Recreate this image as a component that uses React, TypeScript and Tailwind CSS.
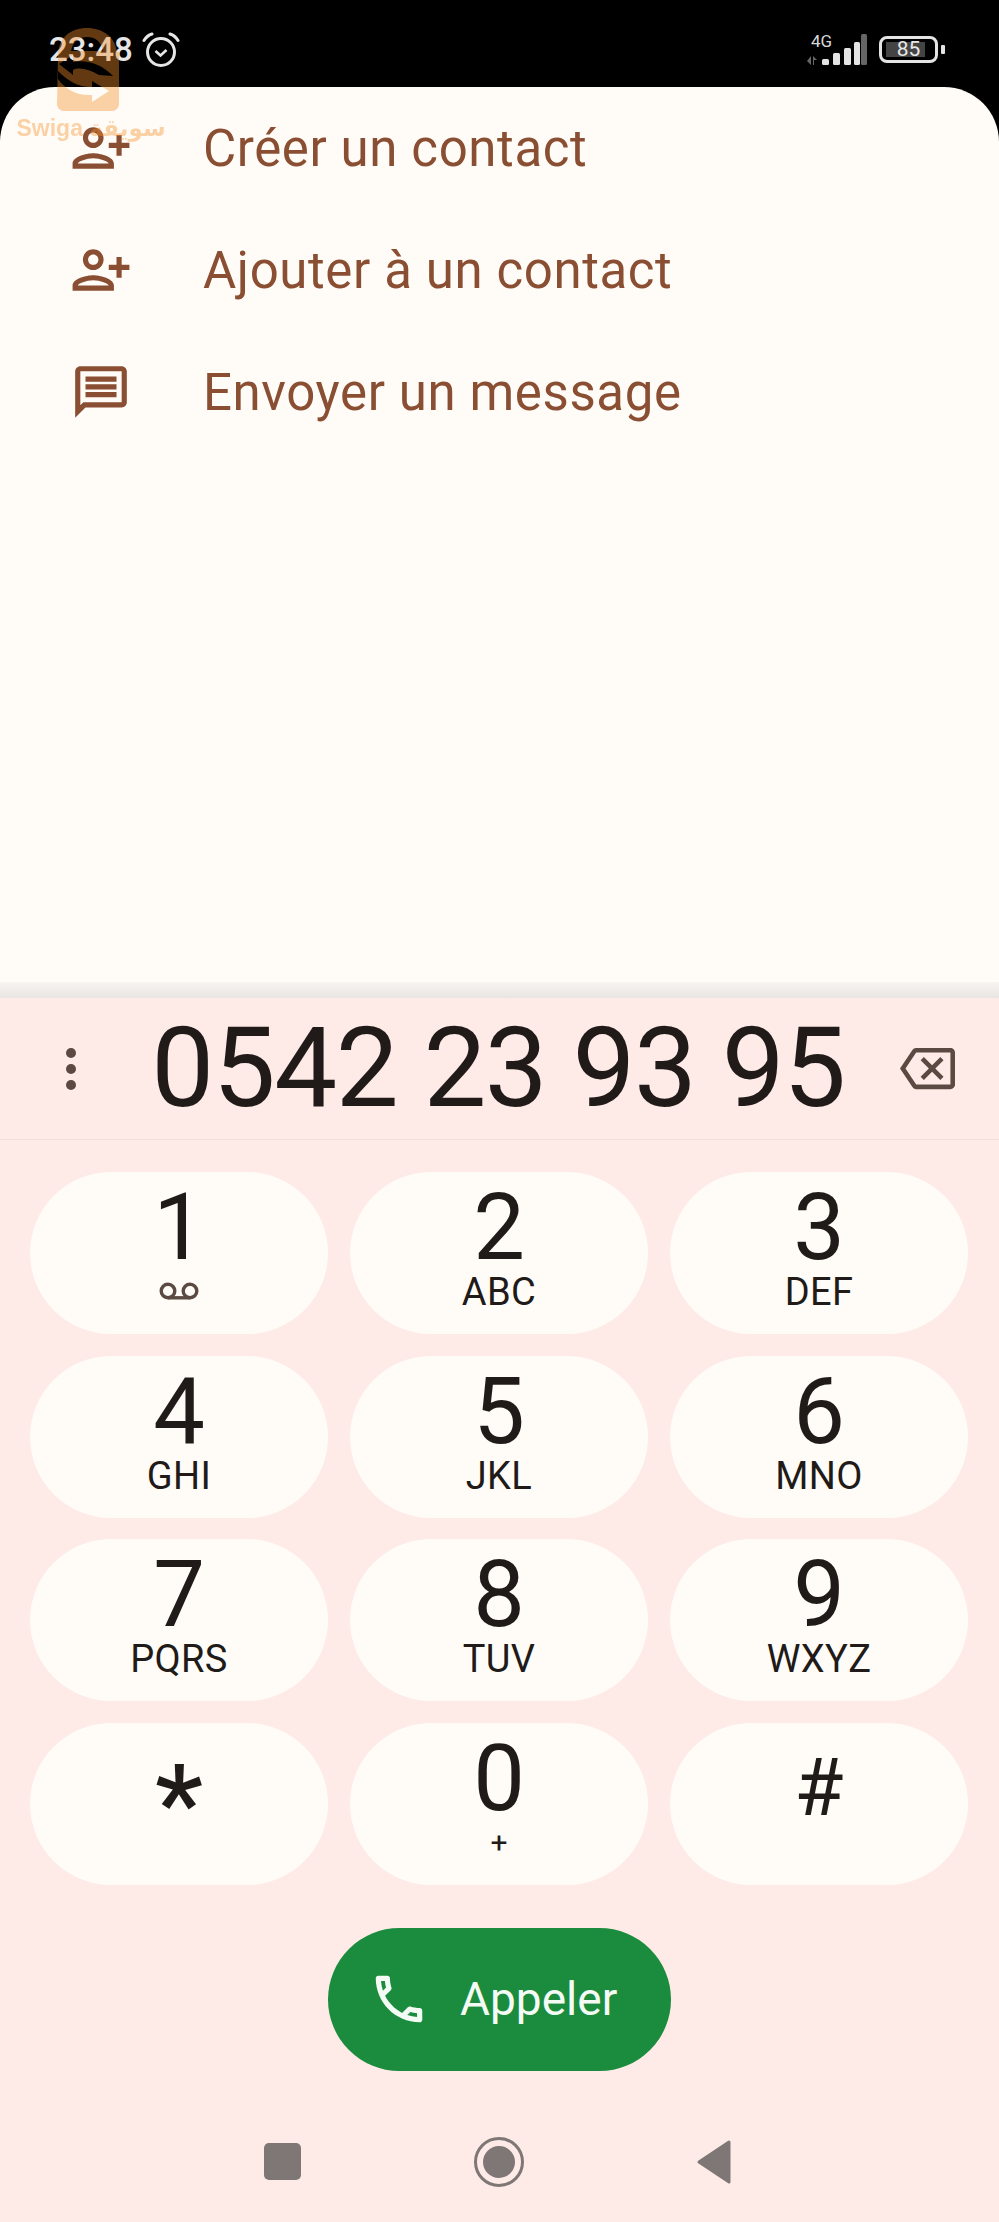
import React from "react";

const personAdd =
  "M15 12c2.21 0 4-1.79 4-4s-1.79-4-4-4-4 1.79-4 4 1.79 4 4 4zm0-6c1.1 0 2 .9 2 2s-.9 2-2 2-2-.9-2-2 .9-2 2-2zm0 8c-2.67 0-8 1.34-8 4v2h16v-2c0-2.66-5.33-4-8-4zm-6 4c.22-.72 3.31-2 6-2 2.7 0 5.8 1.29 6 2H9zm-3-3v-3h3v-2H6V7H4v3H1v2h3v3h2z";
const message =
  "M20 2H4c-1.1 0-2 .9-2 2v18l4-4h14c1.1 0 2-.9 2-2V4c0-1.1-.9-2-2-2zm0 14H5.17L4 17.17V4h16v12zM6 12h12v2H6zm0-3h12v2H6zm0-3h12v2H6z";

const actions = [
  { label: "Créer un contact", path: personAdd, mirror: true },
  { label: "Ajouter à un contact", path: personAdd, mirror: true },
  { label: "Envoyer un message", path: message, mirror: false },
];

const keys = [
  { digit: "1", sub: "" },
  { digit: "2", sub: "ABC" },
  { digit: "3", sub: "DEF" },
  { digit: "4", sub: "GHI" },
  { digit: "5", sub: "JKL" },
  { digit: "6", sub: "MNO" },
  { digit: "7", sub: "PQRS" },
  { digit: "8", sub: "TUV" },
  { digit: "9", sub: "WXYZ" },
  { digit: "*", sub: "" },
  { digit: "0", sub: "+" },
  { digit: "#", sub: "" },
];

const StatusBar = () => (
  <div className="h-[87px] bg-black flex items-start justify-between pl-[49px] pr-[54px] pt-[33px]">
    <div className="flex items-center gap-[9px] h-[34px]">
      <span className="text-[33px] leading-[34px] font-medium text-[#e6e6e6]">23:48</span>
      <svg width="38" height="36" viewBox="0 0 38 36" fill="none" stroke="#e6e6e6" strokeWidth="3">
        <circle cx="19" cy="20" r="13.5" />
        <path d="M13.5 19l5 4.5 6-5.5" strokeWidth="2.6" />
        <path d="M2 8.5Q5 3.5 10 2M36 8.5Q33 3.5 28 2" strokeLinecap="round" />
      </svg>
    </div>
    <div className="flex items-start gap-[11px] h-[34px]">
      <div className="relative w-[62px] h-[32px] mr-[1px]">
        <span className="absolute left-[6px] top-0 text-[17px] leading-[16px] text-[#d8d8d8]">4G</span>
        <svg className="absolute left-0 top-0" width="62" height="32" viewBox="0 0 62 32">
          <path d="M2 28l4-5v9zM8 23l4 4H9v5H8z" fill="#666" />
          <rect x="17" y="26" width="7" height="6" rx="1.5" fill="#e4e4e4" />
          <rect x="28" y="20" width="7" height="12" rx="1.5" fill="#e4e4e4" />
          <rect x="39" y="15" width="7" height="17" rx="1.5" fill="#e4e4e4" />
          <rect x="49" y="9" width="6" height="23" rx="1.5" fill="#e4e4e4" />
          <rect x="56" y="1" width="6" height="31" rx="1.5" fill="#666" />
        </svg>
      </div>
      <div className="flex items-center gap-[3px] mt-[3px]">
        <div className="relative w-[59px] h-[27px] rounded-[8px] border-[3px] border-[#e4e4e4] flex items-center justify-center">
          <div className="absolute left-[4px] top-[3px] bottom-[3px] w-[39px] bg-[#444]" />
          <span className="relative text-[21px] leading-[21px] text-[#e8e8e8]">85</span>
        </div>
        <div className="w-[4px] h-[9px] rounded-[1px] bg-[#e4e4e4]" />
      </div>
    </div>
  </div>
);

const Key = ({ digit, sub }: { digit: string; sub: string }) => (
  <div className="h-[162px] rounded-[81px] bg-[#fffcf8] flex flex-col items-center pt-3 text-[#201a18]">
    <span
      className={
        digit === "#"
          ? "text-[80px] leading-[88px] mt-[9px]"
          : digit === "*"
            ? "text-[108px] leading-[88px] mt-[25px] font-medium"
            : "text-[92px] leading-[88px]"
      }
    >
      {digit}
    </span>
    {digit === "1" ? (
      <svg className="mt-[10px]" width="40" height="18" viewBox="0 0 40 18" fill="none" stroke="#5a4a42" strokeWidth="3.4">
        <circle cx="9" cy="9" r="6.8" />
        <circle cx="31" cy="9" r="6.8" />
        <path d="M9 15.8h22" />
      </svg>
    ) : (
      sub && <span className={sub === "+" ? "text-[30px] leading-[40px]" : "text-[38px] leading-[40px] tracking-[0.4px]"}>{sub}</span>
    )}
  </div>
);

const Watermark = () => (
  <div className="absolute left-[17px] top-[27px] w-[148px] flex flex-col items-center pointer-events-none opacity-40 text-[#f5902c]">
    <svg width="66" height="86" viewBox="0 0 66 86" className="ml-[-6px]">
      <defs>
        <mask id="swiga-holes">
          <rect width="66" height="86" fill="#fff" />
          <path d="M16 24C18 14 24 10 32 10s14 4 16 14z" fill="#000" />
          <path d="M4 37l14-9v7c14-3 30 3 40 14l-14-1C34 42 24 40 18 43v5z" fill="#000" />
          <path d="M3 44c10 11 24 17 34 16v-6l17 10-17 11v-7C22 69 10 62 3 52z" fill="#000" />
        </mask>
      </defs>
      <path mask="url(#swiga-holes)" fill="#f5902c" d="M3 30C3 10 16 1 32 1s28 9 30 24h2v52c0 4-3 7-7 7H9c-4 0-7-3-7-7z" />
    </svg>
    <span className="mt-[2px] whitespace-nowrap text-[23px] leading-[26px] font-bold font-['Liberation_Sans','Noto_Sans','DejaVu_Sans',sans-serif]">
      Swiga سويقة
    </span>
  </div>
);

export default function App() {
  return (
    <div className="relative w-[999px] h-[2222px] overflow-hidden bg-[#feebe7] font-['Roboto',sans-serif]">
      <StatusBar />

      {/* liste d'actions */}
      <div className="bg-black">
        <div className="h-[895px] rounded-t-[55px] bg-[#fffcf8] text-[#8a4f33]">
          {actions.map((a) => (
            <div key={a.label} className="h-[122px] flex items-center pl-[70px] gap-[71px]">
              <svg width="62" height="62" viewBox="0 0 24 24" fill="currentColor" className={a.mirror ? "-scale-x-100" : ""}>
                <path d={a.path} />
              </svg>
              <span className="text-[51px] leading-[62px] tracking-[0.6px] mt-[2px]">{a.label}</span>
            </div>
          ))}
        </div>
      </div>
      <div className="h-[16px] bg-gradient-to-b from-[#f8f4f1] to-[#e9e5e3]" />

      {/* numero */}
      <div className="h-[142px] border-b border-[#f2dfd9] flex items-center pl-[66px] pr-[44px]">
        <div className="flex flex-col gap-[6px]">
          <div className="w-[10px] h-[10px] rounded-full bg-[#5a4a42]" />
          <div className="w-[10px] h-[10px] rounded-full bg-[#5a4a42]" />
          <div className="w-[10px] h-[10px] rounded-full bg-[#5a4a42]" />
        </div>
        <span className="flex-1 pl-[20px] text-center text-[112px] leading-[120px] tracking-[-1.5px] text-[#201a18] whitespace-nowrap -mt-[2px]">
          0542 23 93 95
        </span>
        <svg width="55" height="55" viewBox="0 0 24 24" fill="#5a4a42">
          <path d="M22 3H7c-.69 0-1.23.35-1.59.88L0 12l5.41 8.11c.36.53.9.89 1.59.89h15c1.1 0 2-.9 2-2V5c0-1.1-.9-2-2-2zm0 16H7.07L2.4 12l4.66-7H22v14zM10.41 17L14 13.41 17.59 17 19 15.59 15.41 12 19 8.41 17.59 7 14 10.59 10.41 7 9 8.41 12.59 12 9 15.59z" />
        </svg>
      </div>

      {/* clavier */}
      <div className="grid grid-cols-3 gap-x-[22px] gap-y-[21.5px] pl-[30px] pr-[31px] pt-[32px]">
        {keys.map((k) => (
          <Key key={k.digit} digit={k.digit} sub={k.sub} />
        ))}
      </div>

      <div className="flex justify-center mt-[43px]">
        <div className="w-[343px] h-[143px] rounded-[72px] bg-[#1b8c3d] flex items-center pl-[40px] gap-[30px] text-[#f4fbf5]">
          <svg width="62" height="62" viewBox="0 0 24 24" fill="currentColor">
            <path d="M6.54 5c.06.89.21 1.76.45 2.59l-1.2 1.2c-.41-1.2-.67-2.47-.76-3.79h1.51m9.86 12.02c.85.24 1.72.39 2.6.45v1.49c-1.32-.09-2.59-.35-3.8-.75l1.2-1.19M7.5 3H4c-.55 0-1 .45-1 1 0 9.39 7.61 17 17 17 .55 0 1-.45 1-1v-3.49c0-.55-.45-1-1-1-1.24 0-2.45-.2-3.57-.57-.1-.04-.21-.05-.31-.05-.26 0-.51.1-.71.29l-2.2 2.2c-2.83-1.45-5.15-3.76-6.59-6.59l2.2-2.2c.28-.28.36-.67.25-1.02C8.7 6.45 8.5 5.25 8.5 4c0-.55-.45-1-1-1z" />
          </svg>
          <span className="text-[46px] leading-[52px]">Appeler</span>
        </div>
      </div>

      {/* navigation */}
      <div className="flex items-center justify-center gap-[173px] mt-[66px] ml-[-5px]">
        <div className="w-[37px] h-[37px] rounded-[5px] bg-[#7f7775]" />
        <div className="w-[50px] h-[50px] rounded-full border-[3px] border-[#7f7775] flex items-center justify-center">
          <div className="w-[32px] h-[32px] rounded-full bg-[#7f7775]" />
        </div>
        <svg width="34" height="44" viewBox="0 0 34 44" fill="#7f7775" stroke="#7f7775" strokeWidth="3" strokeLinejoin="round">
          <path d="M32 2v40L2 22z" />
        </svg>
      </div>

      <Watermark />
    </div>
  );
}
